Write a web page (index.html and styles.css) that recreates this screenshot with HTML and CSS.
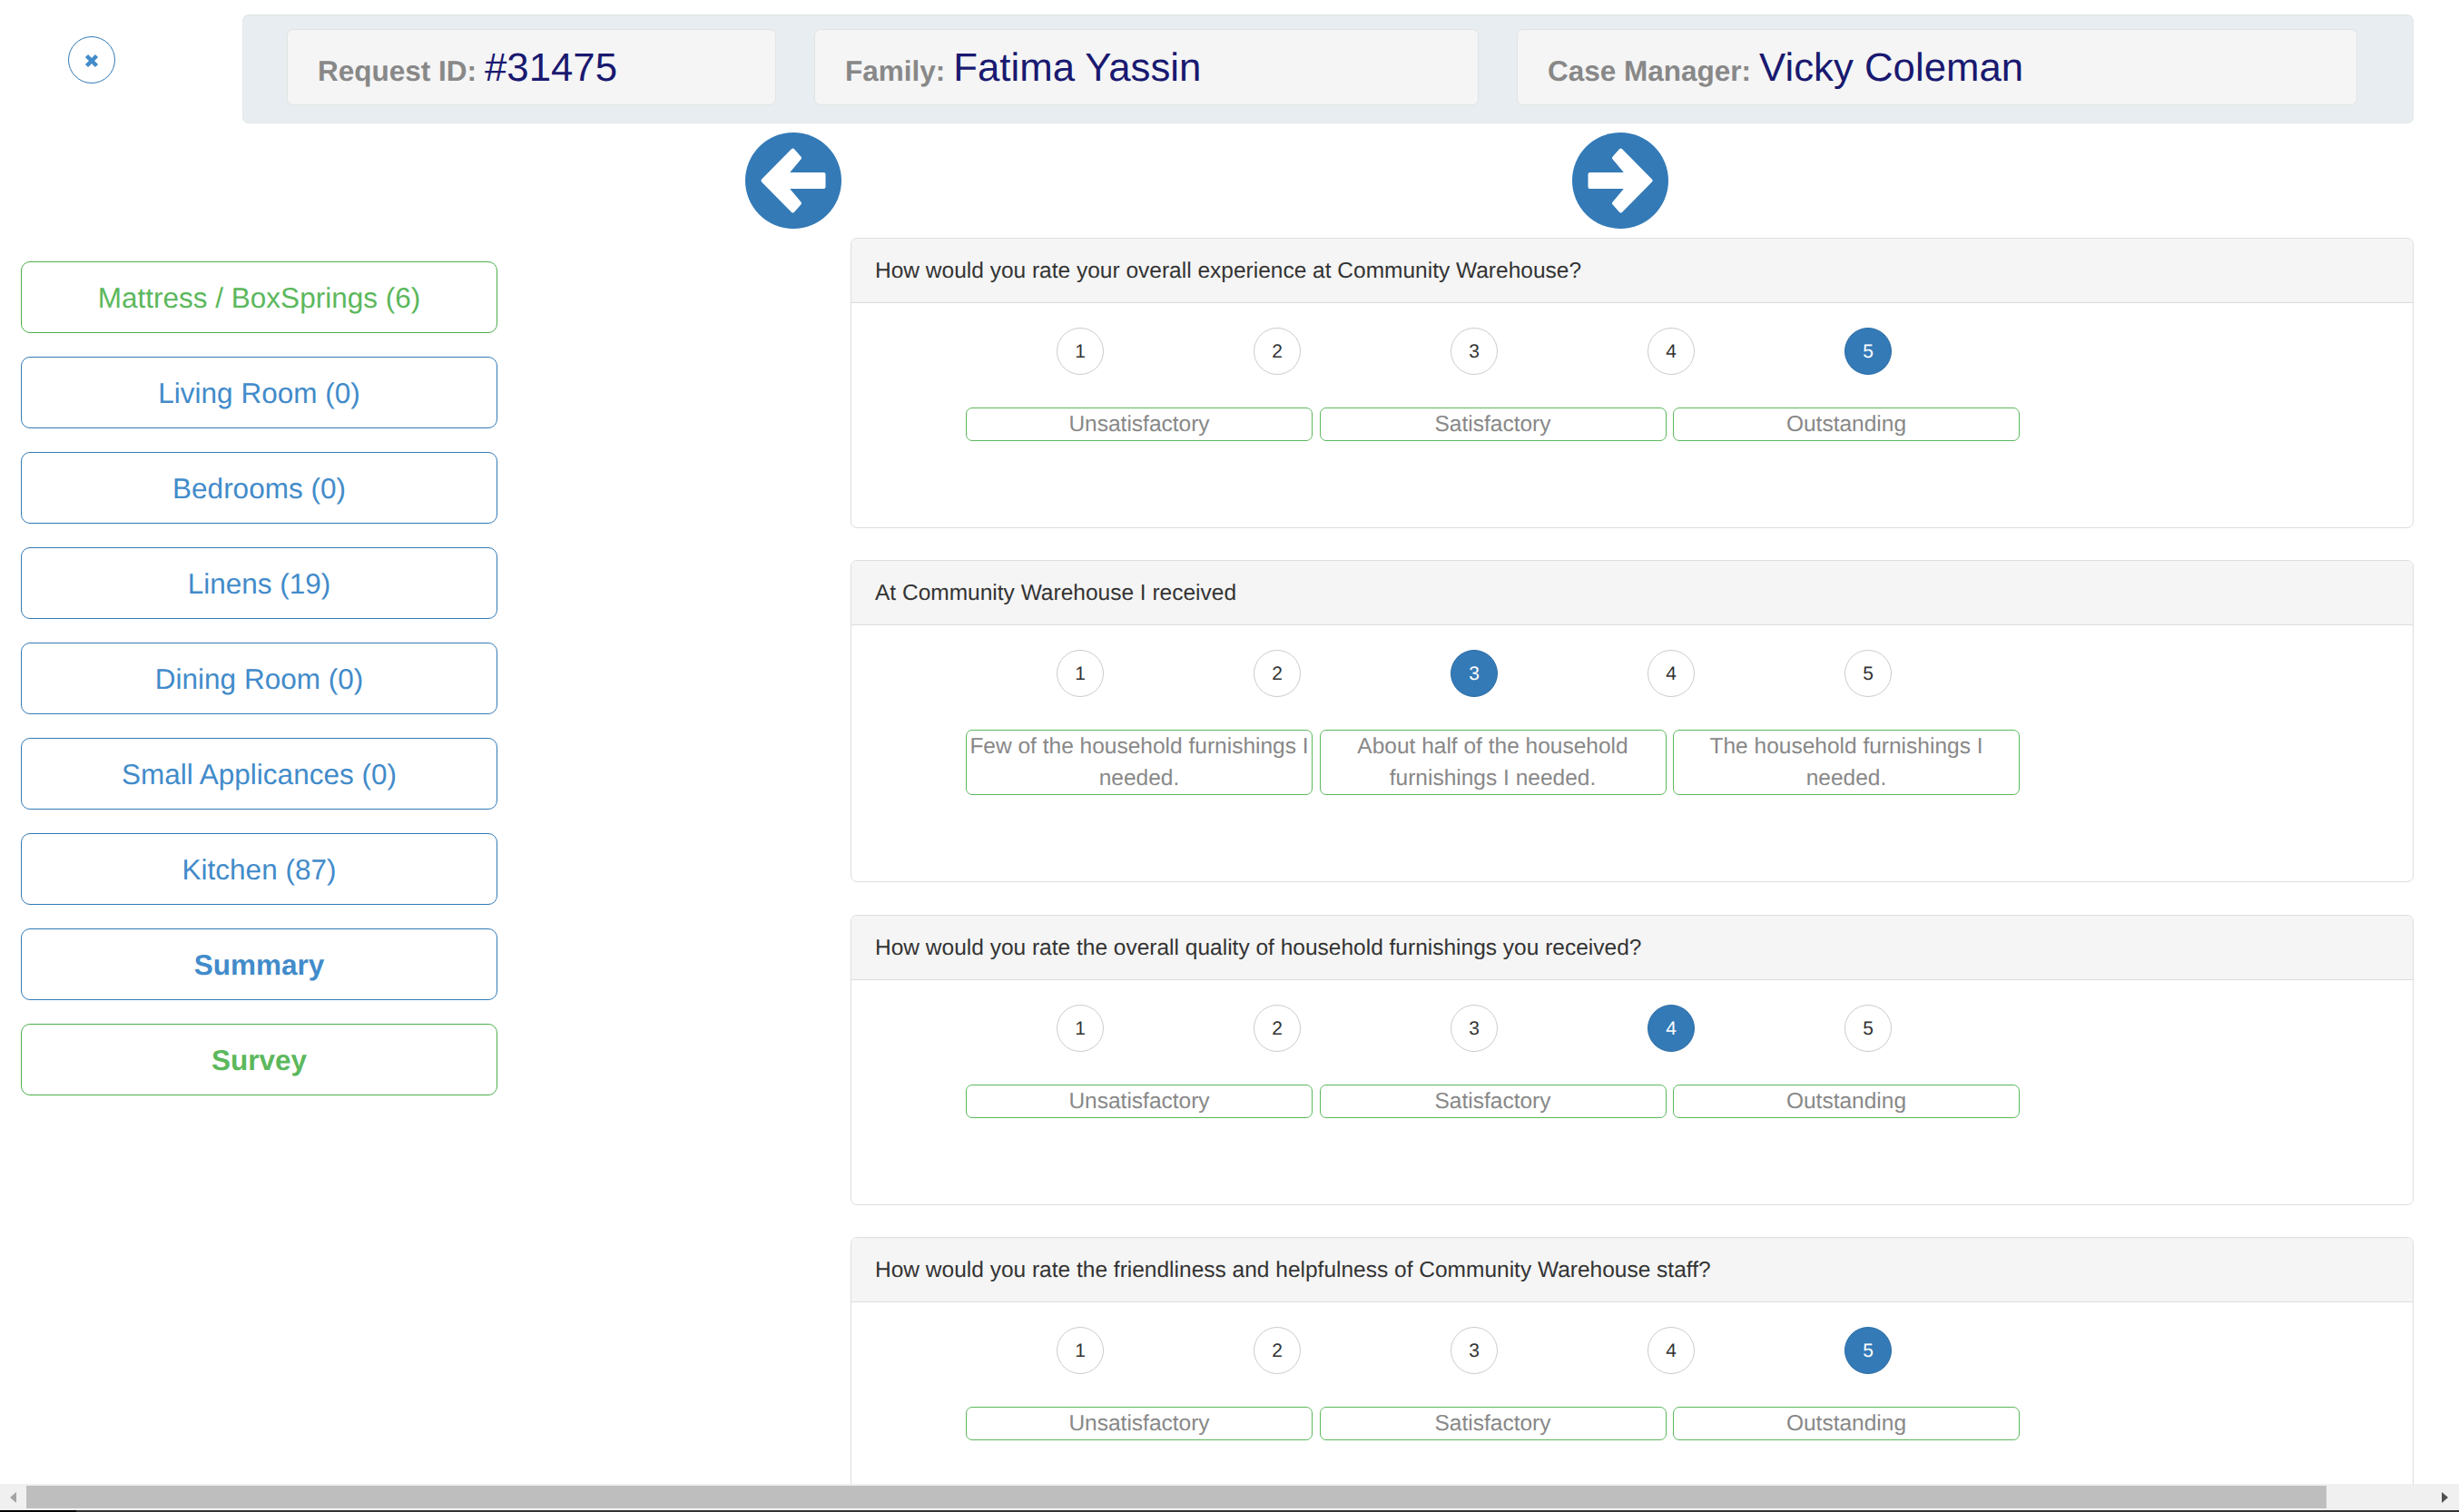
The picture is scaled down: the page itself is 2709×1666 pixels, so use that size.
FILE: index.html
```html
<!DOCTYPE html>
<html lang="en">
  <head>
    <meta charset="UTF-8" />
    <meta name="viewport" content="width=device-width, initial-scale=1.0" />
    <title>Survey</title>
    <link rel="stylesheet" href="styles.css">
  </head>
  <body>
    <div class="page">
      <div class="top">
        <a class="close-btn" href="#">
          <svg width="16" height="16" viewBox="0 0 16 16"><path d="M2.5 2.5 L13.5 13.5 M13.5 2.5 L2.5 13.5" /></svg>
        </a>
        <div class="request-bar">
          <div class="info-card card-id"><span class="info-label">Request ID:</span> <span class="info-value">#31475</span></div>
          <div class="info-card card-family"><span class="info-label">Family:</span> <span class="info-value">Fatima Yassin</span></div>
          <div class="info-card card-manager"><span class="info-label">Case Manager:</span> <span class="info-value">Vicky Coleman</span></div>
        </div>
      </div>

      <div class="arrows">
        <a class="arrow-btn" href="#">
          <svg width="106" height="106" viewBox="0 0 106 106"><circle cx="53" cy="53" r="53" /><polygon points="19.5,53 52.5,19.5 60,28 45,46 86.5,46 86.5,60 45,60 60,78 52.5,86.5" /></svg>
        </a>
        <a class="arrow-btn" href="#">
          <svg width="106" height="106" viewBox="0 0 106 106"><circle cx="53" cy="53" r="53" /><polygon points="86.5,53 53.5,19.5 46,28 61,46 19.5,46 19.5,60 61,60 46,78 53.5,86.5" /></svg>
        </a>
      </div>

      <div class="main">
        <div class="sidebar">
          <a class="side-btn green" href="#">Mattress / BoxSprings (6)</a>
          <a class="side-btn" href="#">Living Room (0)</a>
          <a class="side-btn" href="#">Bedrooms (0)</a>
          <a class="side-btn" href="#">Linens (19)</a>
          <a class="side-btn" href="#">Dining Room (0)</a>
          <a class="side-btn" href="#">Small Applicances (0)</a>
          <a class="side-btn" href="#">Kitchen (87)</a>
          <a class="side-btn bold" href="#">Summary</a>
          <a class="side-btn green bold" href="#">Survey</a>
        </div>

        <div class="questions">
          <div class="panel">
            <div class="panel-heading">How would you rate your overall experience at Community Warehouse?</div>
            <div class="panel-body">
              <div class="circles">
                <a class="circle" href="#">1</a>
                <a class="circle" href="#">2</a>
                <a class="circle" href="#">3</a>
                <a class="circle" href="#">4</a>
                <a class="circle active" href="#">5</a>
              </div>
              <div class="labels">
                <div class="scale-label">Unsatisfactory</div>
                <div class="scale-label">Satisfactory</div>
                <div class="scale-label">Outstanding</div>
              </div>
            </div>
          </div>

          <div class="panel">
            <div class="panel-heading">At Community Warehouse I received</div>
            <div class="panel-body">
              <div class="circles">
                <a class="circle" href="#">1</a>
                <a class="circle" href="#">2</a>
                <a class="circle active" href="#">3</a>
                <a class="circle" href="#">4</a>
                <a class="circle" href="#">5</a>
              </div>
              <div class="labels">
                <div class="scale-label">Few of the household furnishings I needed.</div>
                <div class="scale-label">About half of the household furnishings I needed.</div>
                <div class="scale-label">The household furnishings I needed.</div>
              </div>
            </div>
          </div>

          <div class="panel">
            <div class="panel-heading">How would you rate the overall quality of household furnishings you received?</div>
            <div class="panel-body">
              <div class="circles">
                <a class="circle" href="#">1</a>
                <a class="circle" href="#">2</a>
                <a class="circle" href="#">3</a>
                <a class="circle active" href="#">4</a>
                <a class="circle" href="#">5</a>
              </div>
              <div class="labels">
                <div class="scale-label">Unsatisfactory</div>
                <div class="scale-label">Satisfactory</div>
                <div class="scale-label">Outstanding</div>
              </div>
            </div>
          </div>

          <div class="panel">
            <div class="panel-heading">How would you rate the friendliness and helpfulness of Community Warehouse staff?</div>
            <div class="panel-body">
              <div class="circles">
                <a class="circle" href="#">1</a>
                <a class="circle" href="#">2</a>
                <a class="circle" href="#">3</a>
                <a class="circle" href="#">4</a>
                <a class="circle active" href="#">5</a>
              </div>
              <div class="labels">
                <div class="scale-label">Unsatisfactory</div>
                <div class="scale-label">Satisfactory</div>
                <div class="scale-label">Outstanding</div>
              </div>
            </div>
          </div>
        </div>
      </div>
    </div>

    <div class="scrollbar">
      <span class="scroll-arrow left"></span>
      <div class="scroll-track"><div class="scroll-thumb"></div></div>
      <span class="scroll-arrow right"></span>
    </div>
    <div class="edge"><div class="edge-dark"></div></div>
  </body>
</html>
```

FILE: styles.css
```css
* {
  box-sizing: border-box;
}

html,
body {
  height: 100%;
}

body {
  display: flex;
  flex-direction: column;
  margin: 0;
  overflow: hidden;
  font-family: "Liberation Sans", Arial, sans-serif;
  font-size: 24.5px;
  line-height: 35px;
  color: #333;
  background-color: #fff;
  text-rendering: geometricPrecision;
}

a {
  text-decoration: none;
}

.page {
  flex: 1;
  min-height: 0;
  overflow: hidden;
}

/* top row */
.top {
  display: flex;
  align-items: flex-start;
  padding: 16px 50px 0 75px;
}

.close-btn {
  display: flex;
  justify-content: center;
  align-items: center;
  flex: none;
  width: 52px;
  height: 52px;
  margin-top: 24px;
  margin-right: 140px;
  padding-top: 2px;
  border: 1px solid #337ab7;
  border-radius: 50%;
}

.close-btn path {
  fill: none;
  stroke: #428bca;
  stroke-width: 4.5;
}

.request-bar {
  display: flex;
  gap: 42px;
  flex: 1;
  height: 120px;
  padding: 15px 61px 0 48px;
  background-color: #e7edf0;
  border: 1px solid #e2e7ea;
  border-top-color: #dfe3e5;
  border-radius: 7px;
}

.info-card {
  display: flex;
  align-items: baseline;
  gap: 9px;
  height: 84px;
  padding: 0 33px;
  line-height: 84px;
  background-color: #f5f5f5;
  border: 1px solid #e3e3e3;
  border-radius: 7px;
}

.card-id {
  width: 539px;
}

.card-family {
  width: 732px;
}

.card-manager {
  width: 926px;
}

.info-label {
  font-size: 31.5px;
  font-weight: bold;
  color: #888;
}

.info-value {
  font-size: 43.75px;
  color: #191970;
}

/* arrows */
.arrows {
  display: flex;
  gap: 805px;
  height: 106px;
  margin-top: 10px;
  padding-left: 821px;
}

.arrow-btn {
  display: block;
  height: 106px;
}

.arrow-btn circle {
  fill: #337ab7;
}

.arrow-btn polygon {
  fill: #fff;
  stroke: #fff;
  stroke-width: 4;
  stroke-linejoin: round;
}

/* columns */
.main {
  display: flex;
  margin-top: 10px;
  padding: 0 50px 0 23px;
}

.sidebar {
  display: flex;
  flex-direction: column;
  gap: 26px;
  flex: none;
  width: 525px;
  margin-right: 389px;
  padding-top: 26px;
}

.side-btn {
  display: block;
  height: 79px;
  font-size: 31.5px;
  line-height: 78px;
  text-align: center;
  color: #428bca;
  background-color: #fff;
  border: 1px solid #337ab7;
  border-radius: 10px;
}

.side-btn.green {
  color: #5cb85c;
  border-color: #4cae4c;
}

.side-btn.bold {
  font-weight: bold;
}

.questions {
  flex: 1;
}

.panel {
  margin-bottom: 35.25px;
  background-color: #fff;
  border: 1px solid #ddd;
  border-radius: 7px;
}

.panel-heading {
  height: 71px;
  padding: 18px 26px;
  background-color: #f5f5f5;
  border-bottom: 1px solid #ddd;
  border-radius: 6px 6px 0 0;
}

.panel-body {
  padding: 27px 0 95px 0;
}

.circles {
  display: flex;
  gap: 165px;
  padding-left: 226px;
}

.circle {
  display: block;
  width: 52px;
  height: 52px;
  font-size: 21px;
  line-height: 51px;
  text-align: center;
  color: #333;
  background-color: #fff;
  border: 1px solid #ccc;
  border-radius: 50%;
}

.circle.active {
  color: #fff;
  background-color: #337ab7;
  border-color: #2e6da4;
}

.labels {
  display: grid;
  grid-template-columns: repeat(3, 382px);
  gap: 7.5px;
  margin-top: 36px;
  padding-left: 126px;
}

.scale-label {
  padding: 0 2px;
  text-align: center;
  color: #888;
  border: 1px solid #5cb85c;
  border-radius: 7px;
}

/* fake horizontal scrollbar and the dark edge below it */
.scrollbar {
  display: flex;
  align-items: center;
  flex: none;
  height: 29px;
  padding-top: 2px;
  padding-bottom: 2px;
  background-color: #f0f0f0;
}

.scroll-arrow {
  flex: none;
  width: 0;
  height: 0;
  border-top: 6.5px solid transparent;
  border-bottom: 6.5px solid transparent;
}

.scroll-arrow.left {
  margin: 0 11px;
  border-right: 7px solid #a3a3a3;
}

.scroll-arrow.right {
  margin: 0 12px 0 11px;
  border-left: 7px solid #505050;
}

.scroll-track {
  flex: 1;
  height: 25px;
}

.scroll-thumb {
  width: 2534px;
  height: 25px;
  background-color: #bebebe;
}

.edge {
  flex: none;
  height: 2px;
  padding-left: 84px;
  background-color: #000;
}

.edge-dark {
  height: 2px;
  background-color: #333;
}
```
